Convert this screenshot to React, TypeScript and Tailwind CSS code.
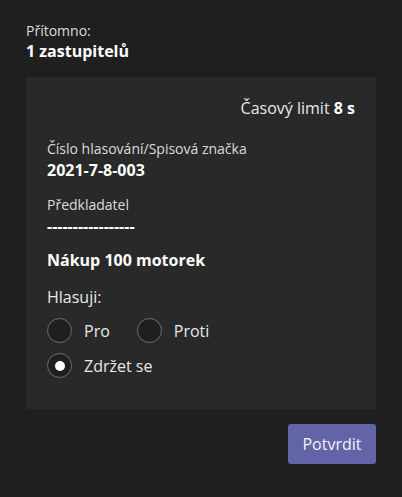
import React, { useState } from 'react';

type Choice = 'pro' | 'proti' | 'zdrzet';

function Radio({ checked, label, onClick }: { checked: boolean; label: string; onClick: () => void }) {
    return (
        <button onClick={onClick} className="flex items-center gap-3 text-left">
            <span className="w-[25px] h-[25px] rounded-full border border-[#6e6e6e] bg-[#1f1f1f] flex items-center justify-center">
                {checked && <span className="w-[10px] h-[10px] rounded-full bg-white" />}
            </span>
            <span className="text-[16px] leading-[22px] text-[#e8e8e8]">{label}</span>
        </button>
    );
}

export default function App() {
    const [choice, setChoice] = useState<Choice>('zdrzet');

    return (
        <div
            className="w-[402px] h-[497px] bg-[#1f1f1f] text-white px-[26px] pt-[22px]"
            style={{ fontFamily: '"Segoe UI", "Open Sans", sans-serif' }}
        >
            <div className="text-[14px] leading-[18px] text-[#dcdcdc]">Přítomno:</div>
            <div className="text-[16px] leading-[22px] font-bold">1 zastupitelů</div>

            <div className="mt-[15px] bg-[#292929] px-[21px] pt-[20px] pb-[31px]">
                <div className="text-right text-[16px] leading-[22px] text-[#e8e8e8]">
                    Časový limit <span className="font-bold text-white">8 s</span>
                </div>

                <div className="mt-[20px] text-[14px] leading-[20px] text-[#dcdcdc]">Číslo hlasování/Spisová značka</div>
                <div className="text-[16px] leading-[22px] font-bold">2021-7-8-003</div>

                <div className="mt-[14px] text-[14px] leading-[20px] text-[#dcdcdc]">Předkladatel</div>
                <div className="text-[16px] leading-[22px] font-bold">-----------------</div>

                <div className="mt-[12px] text-[16px] leading-[22px] font-bold">Nákup 100 motorek</div>

                <div className="mt-[15px] text-[16px] leading-[22px] text-[#e8e8e8]">Hlasuji:</div>
                <div className="mt-[10px] flex flex-col gap-[10px]">
                    <div className="flex gap-[27px]">
                        <Radio checked={choice === 'pro'} label="Pro" onClick={() => setChoice('pro')} />
                        <Radio checked={choice === 'proti'} label="Proti" onClick={() => setChoice('proti')} />
                    </div>
                    <Radio checked={choice === 'zdrzet'} label="Zdržet se" onClick={() => setChoice('zdrzet')} />
                </div>
            </div>

            <div className="flex justify-end mt-[15px]">
                <button className="w-[88px] h-[40px] rounded-[3px] bg-[#6264a7] text-[16px] text-[#f3f3f3]">Potvrdit</button>
            </div>
        </div>
    );
}
